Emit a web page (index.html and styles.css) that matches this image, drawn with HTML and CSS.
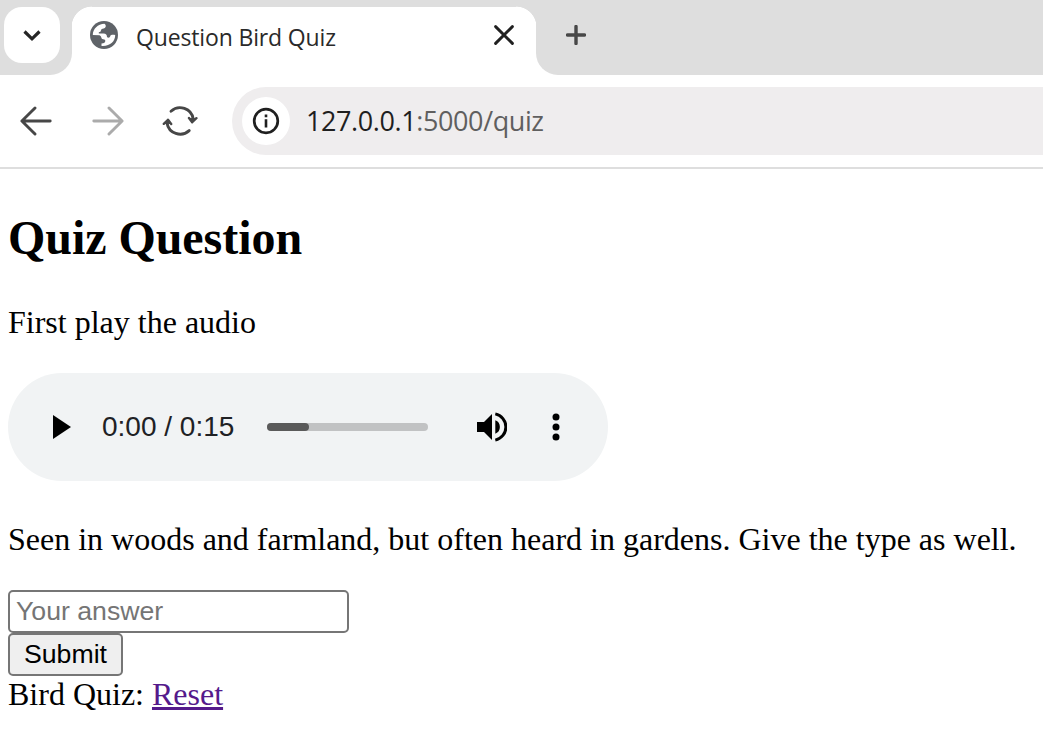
FILE: index.html
```html
<!DOCTYPE html>
<html lang="en">
<head>
<meta charset="utf-8">
<title>Question Bird Quiz</title>
<link rel="stylesheet" href="styles.css">
</head>
<body>
<header class="browser">
  <div class="tabstrip">
    <div class="corner">
      <div class="tab-search"><svg width="56" height="56" viewBox="0 0 56 56"><path d="M20.5 24.5l7.5 7.3 7.5-7.3" fill="none" stroke="#262626" stroke-width="3.2"/></svg></div>
    </div>
    <div class="tab">
      <svg class="globe" width="28" height="28" viewBox="0 0 28 28"><circle cx="14" cy="14" r="14" fill="#5f6368"/><path d="M2.8 14C2.8 8 7.8 3 14.5 2.8C16.2 4 16.2 6 14.8 7C13.5 8 11.2 7.6 11 9.2C10.8 10.8 10 11 8.8 11.2V12.5H13.5C16 12.5 17 14 17 16C18 17.2 20 16.8 20.5 14.5C21 13.6 23 13.5 25.2 14C25.2 20.5 20 25.5 11.5 24.9V22.5C14 22.5 15.5 21.5 15.3 19.5C15 18 13.5 18.5 12.2 18C11 17.2 11.5 15 9.5 14.3Z" fill="#fff"/></svg>
      <span class="tab-title">Question Bird Quiz</span>
      <svg class="close" width="20" height="20" viewBox="0 0 20 20"><path d="M1.6 1.6l16.8 16.8M18.4 1.6L1.6 18.4" stroke="#202020" stroke-width="2.9" stroke-linecap="round"/></svg>
    </div>
    <div class="rest">
      <svg width="20" height="20" viewBox="0 0 20 20"><path d="M10 1.5v17M1.5 10h17" stroke="#474747" stroke-width="3.4" stroke-linecap="round"/></svg>
    </div>
  </div>
  <div class="toolbar">
    <svg width="32" height="32" viewBox="0 0 32 32"><path d="M30.2 16H2M15 3L1.9 16 15 29" fill="none" stroke="#474747" stroke-width="2.9" stroke-linecap="round" stroke-linejoin="round"/></svg>
    <svg class="forward" width="32" height="32" viewBox="0 0 32 32"><path d="M1.8 16H30M17 3L30.1 16 17 29" fill="none" stroke="#ababab" stroke-width="2.9" stroke-linecap="round" stroke-linejoin="round"/></svg>
    <svg class="reload" width="36" height="34" viewBox="0 0 36 34"><path d="M9 7.3A13.3 13.3 0 0 1 31.2 15M27.2 26.6A13.3 13.3 0 0 1 5 19" fill="none" stroke="#474747" stroke-width="2.9" stroke-linecap="round"/><path d="M27 14l3.2 4.2 4.2-4M9.2 20L6 15.8l-4.2 4" fill="#474747" stroke="#474747" stroke-width="2.4" stroke-linejoin="round" stroke-linecap="round"/></svg>
    <div class="omnibox">
      <div class="info"><svg width="28" height="28" viewBox="0 0 28 28"><circle cx="14" cy="14" r="11.8" fill="none" stroke="#1f1f1f" stroke-width="2.7"/><path d="M14 12.3v8.2M14 7.6v2.6" stroke="#1f1f1f" stroke-width="2.6"/></svg></div>
      <div class="url">127.0.0.1<span class="path">:5000/quiz</span></div>
    </div>
  </div>
</header>
<main class="page">
  <h2 class="heading">Quiz Question</h2>
  <p class="text">First play the audio</p>
  <div class="player">
    <svg width="18" height="24" viewBox="0 0 18 24"><path d="M0 0l18 12L0 24z"/></svg>
    <span class="time">0:00 / 0:15</span>
    <div class="track"><div class="buffered"></div></div>
    <svg class="volume" width="30" height="30" viewBox="0 0 30 30"><path d="M0 10h7l8-8v26l-8-8H0zM18.3 8.3v13.4a7.2 7.2 0 0 0 0-13.4z"/><path d="M18.3 1.9a13.4 13.4 0 0 1 0 26.2" fill="none" stroke="#000" stroke-width="3"/></svg>
    <svg class="more" width="8" height="28" viewBox="0 0 8 28"><circle cx="4" cy="4" r="3.5"/><circle cx="4" cy="14" r="3.5"/><circle cx="4" cy="24" r="3.5"/></svg>
  </div>
  <p class="text hint">Seen in woods and farmland, but often heard in gardens. Give the type as well.</p>
  <form class="answer">
    <input class="field" type="text" placeholder="Your answer">
    <button class="submit" type="button">Submit</button>
  </form>
  <div class="footer">Bird Quiz: <a class="reset" href="#">Reset</a></div>
</main>
</body>
</html>
```
FILE: styles.css
```css
* { box-sizing: border-box; }
body { margin: 0; width: 1043px; height: 744px; overflow: hidden; background: #fff; color: #000; font-family: "Liberation Serif", serif; }
svg { display: block; flex: none; }
.browser { height: 169px; border-bottom: 2px solid #dedede; font-family: "Open Sans", sans-serif; }
.tabstrip { display: flex; height: 75px; background: linear-gradient(#dedede 7px, #fff 7px); }
.corner { width: 72px; height: 75px; padding: 7px 4px; background: #dedede; border-bottom-right-radius: 22px; }
.tab-search { width: 56px; height: 56px; border-radius: 18px; background: #fff; }
.tab { width: 464px; display: flex; align-items: center; padding: 0 22px 5px 18px; background: radial-gradient(circle at 20px 27px, #fff 20px, #dedede 20.7px) 0 0 / 20px 27px no-repeat, radial-gradient(circle at 0 27px, #fff 20px, #dedede 20.7px) 100% 0 / 20px 27px no-repeat, linear-gradient(#dedede 7px, #fff 7px); }
.globe { margin-right: 18px; }
.tab-title { flex: 1; font-size: 23px; line-height: 32px; letter-spacing: -.15px; color: #2a2a2a; white-space: nowrap; padding-top: 3px; }
.rest { flex: 1; background: #dedede; border-bottom-left-radius: 22px; padding: 25px 0 0 30px; }
.toolbar { display: flex; align-items: center; height: 92px; padding-left: 20px; background: radial-gradient(circle at 100% 100%, #fff 6px, #dedede 6.7px) -4px 0 / 6px 6px no-repeat; }
.forward { margin-left: 40px; }
.reload { margin-left: 38px; }
.omnibox { flex: 1; display: flex; align-items: center; height: 68px; margin-left: 34px; padding-left: 10px; border-radius: 34px 0 0 34px; background: #efedee; }
.info { display: grid; place-items: center; width: 48px; height: 48px; border-radius: 50%; background: #fff; }
.url { margin-left: 16px; font-size: 27px; line-height: 36px; letter-spacing: -.4px; color: #1f1f1f; }
.path { color: #5f5f5f; }
.page { padding: 0 8px; }
.heading { margin: 41px 0 0; font-size: 48px; line-height: 56px; font-weight: bold; letter-spacing: -.05px; }
.text { margin: 38px 0 0; font-size: 32px; line-height: 36px; white-space: nowrap; }
.player { display: flex; align-items: center; width: 600px; height: 108px; margin-top: 33px; padding-left: 45px; border-radius: 54px; background: #f1f3f4; }
.time { margin-left: 31px; width: 165px; font: 28px/32px "Liberation Sans", sans-serif; color: #202124; white-space: nowrap; }
.track { width: 161px; height: 8px; border-radius: 4px; background: #c1c2c3; }
.buffered { width: 42px; height: 8px; border-radius: 4px; background: #5a5a5a; }
.volume { margin-left: 49px; }
.more { margin-left: 45px; }
.hint { margin-top: 40px; }
.answer { display: flex; flex-direction: column; align-items: flex-start; margin: 33px 0 0; }
.field, .submit { font: 26.67px/32px "Liberation Sans", sans-serif; border: 2px solid #767676; border-radius: 5px; height: 43px; margin: 0; }
.field { width: 341px; padding: 0 6px 1px; background: #fff; outline: 0; }
.field::placeholder { color: #757575; opacity: 1; }
.submit { width: 115px; padding: 0 0 2px; background: #efefef; color: #000; }
.footer { font-size: 32px; line-height: 37px; }
.reset { color: #551a8b; text-decoration-thickness: 3px; }
```
